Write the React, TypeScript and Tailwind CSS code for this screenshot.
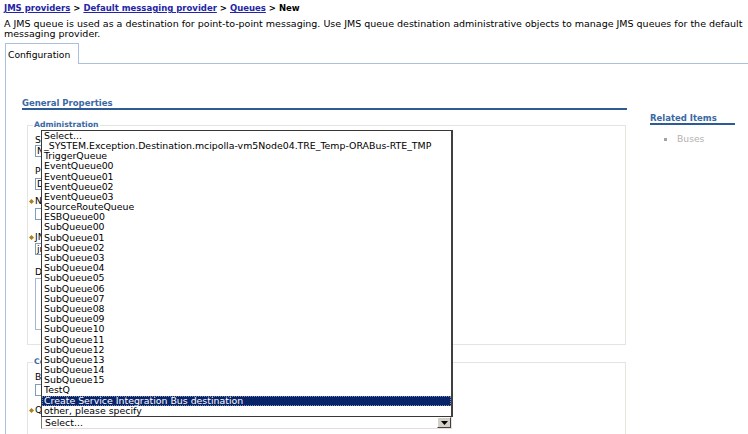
import React from "react";

const queues = [
  "Select...",
  "_SYSTEM.Exception.Destination.mcipolla-vm5Node04.TRE_Temp-ORABus-RTE_TMP",
  "TriggerQueue",
  "EventQueue00",
  "EventQueue01",
  "EventQueue02",
  "EventQueue03",
  "SourceRouteQueue",
  "ESBQueue00",
  ...Array.from({ length: 16 }, (_, i) => `SubQueue${String(i).padStart(2, "0")}`),
  "TestQ",
  "Create Service Integration Bus destination",
  "other, please specify",
];

const Diamond = () => (
  <svg viewBox="0 0 6 6" className="inline-block w-[5px] h-[5px] -ml-[6px] mr-[1px] align-middle">
    <polygon points="3,0 6,3 3,6 0,3" fill="#a8801e" />
  </svg>
);

const Label = ({ text, required, className = "" }: { text: string; required?: boolean; className?: string }) => (
  <div className={`ml-[2px] h-[10px] leading-[10px] whitespace-nowrap ${className}`}>
    {required && <Diamond />}
    {text}
  </div>
);

const TextBox = ({ value, className = "" }: { value: string; className?: string }) => (
  <div
    className={`ml-[2px] w-[300px] h-[12px] leading-[10px] border border-[#7f9db9] pl-[1px] whitespace-nowrap overflow-hidden ${className}`}
  >
    {value}
  </div>
);

const App = () => {
  return (
    <div className="relative w-[748px] h-[434px] overflow-hidden bg-white text-black font-['DejaVu_Sans',sans-serif] text-[9.2px]">
      {/* Breadcrumb */}
      <div className="pl-[4px] pt-[3px] leading-[10px] text-[8.5px] font-bold whitespace-nowrap">
        <a className="text-[#2424a6] underline">JMS providers</a> &gt;{" "}
        <a className="text-[#2424a6] underline">Default messaging provider</a> &gt;{" "}
        <a className="text-[#2424a6] underline">Queues</a> &gt; New
      </div>
      <p className="pl-[4px] mt-[6px] leading-[10px] text-[9.5px] whitespace-nowrap">
        A JMS queue is used as a destination for point-to-point messaging. Use JMS queue destination administrative
        objects to manage JMS queues for the default
        <br />
        messaging provider.
      </p>

      {/* Tabs */}
      <div className="mt-[4px] flex h-[21px]">
        <div className="ml-[5px] w-[74px] border border-b-0 border-[#a9c0de] pl-[2px] pt-[6px] leading-[10px]">
          Configuration
        </div>
        <div className="flex-1 border-b border-[#a9c0de]" />
      </div>

      <div className="ml-[5px] border-l border-[#a9c0de] pl-[16px] pt-[34px] h-[400px]">
        <div className="flex gap-[23px]">
          {/* Main column */}
          <div className="w-[605px]">
            <div className="h-[10px] leading-[10px] text-[8.5px] font-bold text-[#3a68a3]">General Properties</div>
            <div className="h-[2px] bg-[#2d5b94]" />

            <fieldset className="mt-[10px] ml-[5px] mr-[1px] border border-[#e2e6df] pl-[5px] pt-[5px] pb-[14px]">
              <legend className="px-[1px] h-[10px] leading-[10px] text-[7.7px] font-bold text-[#3a68a3]">
                Administration
              </legend>
              <Label text="Scope" />
              <TextBox value="Node=mcipolla-vm5Node04,Server=server1" />
              <Label text="Provider" className="mt-[9px]" />
              <TextBox value="Default messaging provider" className="mt-[2px]" />
              <Label text="Name" required className="mt-[6px]" />
              <TextBox value="" className="mt-[2px]" />
              <Label text="JNDI name" required className="mt-[12px]" />
              <TextBox value="jms/" className="mt-[1px]" />
              <Label text="Description" className="mt-[12px]" />
              <div className="ml-[2px] mt-[1px] w-[300px] h-[52px] border border-[#a6b8cf]" />
            </fieldset>

            <fieldset className="mt-[12px] ml-[5px] mr-[1px] border border-[#e2e6df] pl-[5px] pt-[5px] pb-[20px]">
              <legend className="px-[1px] h-[10px] leading-[10px] text-[7.7px] font-bold text-[#3a68a3]">
                Connection
              </legend>
              <Label text="Bus name" />
              <TextBox value="" className="mt-[2px]" />
              <Label text="Queue name" required className="mt-[9px]" />

              {/* Queue name select with its open list */}
              <div className="relative ml-[8px] mt-[1px] w-[411px] h-[13px] border border-t-[#7a7a7a] border-l-[#7a7a7a] border-r-[#e4e4e4] border-b-[#ecd8d8] flex">
                <div className="flex-1 pl-[3px] leading-[11px] text-[9.4px]">Select...</div>
                <div className="w-[14px] h-[11px] bg-[#d4d0c8] border border-t-white border-l-white border-r-[#404040] border-b-[#404040] flex items-center justify-center">
                  <svg viewBox="0 0 7 4" className="w-[7px] h-[4px]">
                    <polygon points="0,0 7,0 3.5,4" fill="#000" />
                  </svg>
                </div>

                <div className="absolute z-10 bottom-full -left-px w-[412px] bg-white border border-[#383838] border-r-2 border-r-[#404040] text-[9.4px]">
                  {queues.map((q) => (
                    <div
                      key={q}
                      className={`h-[10.2px] leading-[10.2px] pl-[2px] whitespace-nowrap ${
                        q.startsWith("Create")
                          ? "bg-[#0a246a] text-white outline outline-1 outline-dotted outline-[#7d8bb5] -outline-offset-1"
                          : ""
                      }`}
                    >
                      {q}
                    </div>
                  ))}
                </div>
              </div>
            </fieldset>
          </div>

          {/* Related items */}
          <div className="pt-[15px] w-[85px]">
            <div className="h-[10px] leading-[10px] text-[8.5px] font-bold text-[#3a68a3] whitespace-nowrap">
              Related Items
            </div>
            <div className="h-[2px] bg-[#2d5b94]" />
            <div className="mt-[9px] ml-[14px] flex items-center h-[10px] leading-[10px] text-[#b2b2b2]">
              <span className="w-[3px] h-[3px] bg-[#a3a3a3] mr-[10px]" />
              Buses
            </div>
          </div>
        </div>
      </div>
    </div>
  );
};

export default App;
